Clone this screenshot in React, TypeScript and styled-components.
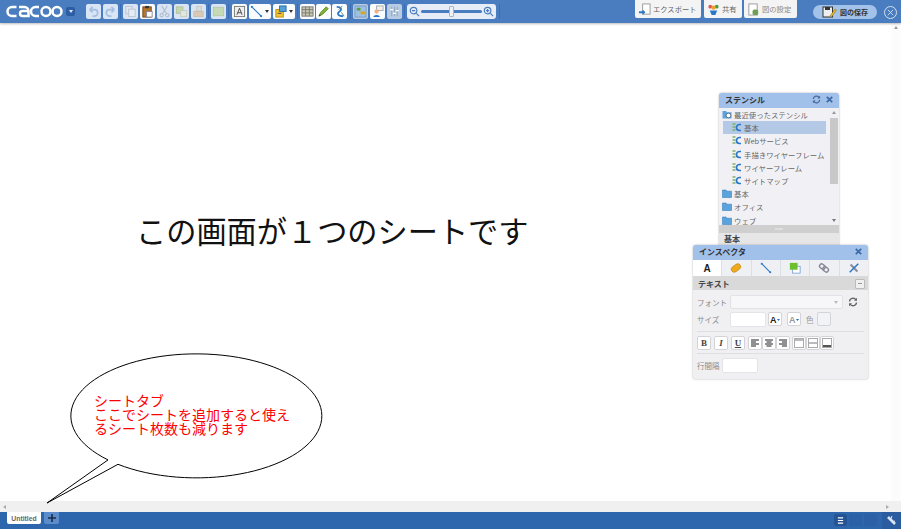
import React from "react";
import styled, { createGlobalStyle } from "styled-components";

const Global = createGlobalStyle`
  html, body { margin: 0; padding: 0; width: 901px; height: 529px; overflow: hidden; background: #fff; }
  body { font-family: "Noto Sans CJK JP", "Noto Sans", sans-serif; }
`;
const Page = styled.div`width: 901px; height: 529px; display: flex; flex-direction: column; position: relative; overflow: hidden;`;
const Header = styled.header`
  height: 23px; background: #4a7dbf; display: flex; align-items: center; padding-left: 6px; box-sizing: border-box;
  box-shadow: 0 1px 2px rgba(60,60,60,.35); position: relative; z-index: 2; flex: none;
`;
const Logo = styled.svg`width: 57px; height: 13px; flex: none;`;
const LogoMenu = styled.span`
  width: 9px; height: 9px; margin-left: 3px; margin-right: 11px; background: #2d5ea5; border-radius: 2px; flex: none;
  display: flex; align-items: center; justify-content: center;
  &::after { content: ""; border: 2.5px solid transparent; border-top: 3px solid #dfe8f5; border-bottom: 0; }
`;
const Tools = styled.div`display: flex; align-items: center; gap: 2px;`;
const TightTools = styled.div`display: flex; align-items: center; gap: 1px;`;
const Sep = styled.span<{ $l?: number; $r?: number }>`
  width: 1px; height: 15px; background: #3a6db3; margin: 0 ${p => p.$r ?? 0}px 0 ${p => p.$l ?? 0}px; flex: none;
`;
const Tool = styled.span<{ $dim?: boolean; $wide?: boolean; $on?: boolean }>`
  width: ${p => (p.$wide ? 22 : 15)}px; height: 15px; border-radius: 2px; flex: none;
  background: ${p => (p.$on ? "#b9cbe2" : p.$dim ? "#d9e5f4" : "#fbfcfe")};
  display: flex; align-items: center; padding-left: 1px; box-sizing: border-box;
  & > svg { width: 13px; height: 13px; flex: none; opacity: ${p => (p.$dim ? 0.6 : 1)}; }
`;
const Caret = styled.span`
  margin-left: 2px; border: 2.5px solid transparent; border-top: 3px solid #333; border-bottom: 0; flex: none;
`;
const ZoomBox = styled.div`
  width: 89px; height: 15px; background: #e6edf7; border-radius: 3px; display: flex; align-items: center;
  padding: 0 2px; box-sizing: border-box; gap: 1px; flex: none;
  & > svg { width: 11px; height: 11px; flex: none; }
`;
const Track = styled.div`flex: 1; height: 3px; background: #4a7dbf; border-radius: 2px; position: relative;`;
const Thumb = styled.span`position: absolute; left: 28px; top: -4px; width: 3px; height: 9px; background: #eef1f5; border: 1px solid #a9b5c6; border-radius: 1px;`;
const RightGroup = styled.div`margin-left: auto; display: flex; align-items: flex-start; align-self: flex-start; height: 19px;`;
const Action = styled.button<{ $w: number; $mr?: number; $dim?: boolean }>`
  width: ${p => p.$w}px; height: 18px; margin-right: ${p => p.$mr ?? 3}px; border: 0; padding: 0 0 0 3px; background: #f4f4f4; border-radius: 0 0 2px 2px;
  display: flex; align-items: center; gap: 2px; font: 7.3px "Noto Sans CJK JP", sans-serif; color: ${p => (p.$dim ? "#888" : "#666")};
  box-sizing: border-box; white-space: nowrap; & > svg { width: 13px; height: 13px; flex: none; }
`;
const SavePill = styled.button`
  width: 64px; height: 14px; margin: 5px 7px 0 16px; border: 0; border-radius: 7px; background: #a3c2ea; padding: 0 0 0 9px;
  display: flex; align-items: center; gap: 3px; font: bold 7px "Noto Sans CJK JP", sans-serif; color: #333; box-sizing: border-box; white-space: nowrap;
  & > svg { width: 15px; height: 12px; flex: none; }
`;
const CloseRing = styled.span`
  width: 13px; height: 13px; margin: 6px 4px 0 0; border: 1px solid #d4e0f0; border-radius: 50%; color: #d4e0f0; display: flex; box-sizing: border-box;
  align-items: center; justify-content: center; flex: none; & > svg { width: 9px; height: 9px; }
`;
const Middle = styled.div`flex: 1; display: flex; min-height: 0;`;
const Canvas = styled.main`flex: 1; position: relative; background: #fff;`;
const VScroll = styled.div`width: 10px; background: #fcfcfc; display: flex; justify-content: center; padding-top: 3px; box-sizing: border-box; flex: none;`;
const Arrow = styled.span<{ $d: "up" | "down" | "left" | "right"; $c?: string }>`
  width: 0; height: 0; border: 2.5px solid transparent; flex: none;
  ${p => (p.$d === "up" ? `border-top:0;border-bottom:3px solid ${p.$c ?? "#999"};` : "")}
  ${p => (p.$d === "down" ? `border-bottom:0;border-top:3px solid ${p.$c ?? "#777"};` : "")}
  ${p => (p.$d === "left" ? `border-left:0;border-right:3px solid ${p.$c ?? "#aaa"};` : "")}
  ${p => (p.$d === "right" ? `border-right:0;border-left:3px solid ${p.$c ?? "#aaa"};` : "")}
`;
const HScroll = styled.div`height: 11px; background: #f0f0f0; display: flex; align-items: center; justify-content: space-between; padding: 0 12px 0 3px; flex: none;`;
const Footer = styled.footer`height: 17px; background: #2e66ae; display: flex; align-items: flex-start; padding-left: 7px; flex: none;`;
const SheetTab = styled.div`
  width: 34px; height: 12px; background: #fff; border-radius: 0 0 2px 2px; font: bold 6.8px "Liberation Sans", sans-serif; color: #666;
  display: flex; align-items: center; justify-content: center;
`;
const AddTab = styled.div`
  width: 15px; height: 12px; margin-left: 3px; background: #5b8ccb; border-radius: 0 0 2px 2px; display: flex; align-items: center; justify-content: center;
  & > svg { width: 8px; height: 8px; }
`;
const FooterRight = styled.div`margin-left: auto; display: flex; height: 17px; align-items: flex-start;`;
const FootBtn = styled.span<{ $on?: boolean }>`
  width: 13px; height: 12px; margin-right: 2px; margin-top: 2px; border-radius: 2px; background: ${p => (p.$on ? "#245494" : "#2b60a6")};
  display: flex; align-items: center; justify-content: center; & > svg { width: 7px; height: 7px; }
`;
const FootEnd = styled.span`
  width: 19px; height: 17px; margin-left: 3px; background: #2a5c9f; display: flex; align-items: center; justify-content: center; & > svg { width: 11px; height: 11px; }
`;
const Headline = styled.div`position: absolute; left: 136px; top: 186px; font-size: 30.2px; line-height: 42px; color: #111; white-space: nowrap;`;
const Bubble = styled.svg`position: absolute; left: 40px; top: 325px; width: 300px; height: 160px; overflow: visible;`;
const BubbleText = styled.div`position: absolute; left: 94px; top: 370px; width: 200px; font-size: 14px; line-height: 14px; color: #f00;`;
const BubbleLine = styled.div`white-space: nowrap; height: 14px;`;

const Panel = styled.section<{ $x: number; $y: number; $w: number; $h: number }>`
  position: absolute; left: ${p => p.$x}px; top: ${p => p.$y}px; width: ${p => p.$w}px; height: ${p => p.$h}px;
  background: #f0f0f3; border-radius: 3px 3px 2px 2px; box-shadow: 0 0 2px rgba(90,90,90,.55); overflow: hidden; box-sizing: border-box;
`;
const PanelHead = styled.div`
  height: 15px; background: #a1c0ea; display: flex; align-items: center; padding: 0 5px 2px 6px; box-sizing: border-box; gap: 4px; font: bold 8px "Noto Sans CJK JP", sans-serif; color: #333;
  & > span { flex: 1; } & > svg { width: 9px; height: 9px; flex: none; }
`;
const ListWrap = styled.div`display: flex; height: 117px; background: #f1f1f5;`;
const List = styled.div`flex: 1; padding: 0 3px; overflow: hidden; min-width: 0;`;
const Row = styled.div<{ $indent?: boolean; $sel?: boolean }>`
  height: 13.2px; display: flex; align-items: center; gap: 2px; font-size: 7.4px; color: #666; white-space: nowrap;
  margin-left: ${p => (p.$indent ? 1 : 0)}px; padding-left: ${p => (p.$indent ? 9 : 0)}px;
  background: ${p => (p.$sel ? "#b3c9e6" : "transparent")};
  & > svg { width: 10px; height: 9px; flex: none; }
`;
const Scroll = styled.div`width: 10px; display: flex; flex-direction: column; align-items: center; padding: 3px 0; box-sizing: border-box; gap: 4px; flex: none;`;
const ScrollThumb = styled.div`width: 8px; height: 66px; background: #c8c8c8;`;
const ScrollGap = styled.div`flex: 1;`;
const Handle = styled.div`height: 8px; background: #cfcfcf; display: flex; align-items: center; justify-content: center; &::after { content: ""; width: 8px; height: 2px; background: #dedede; }`;
const PaneTitle = styled.div`height: 12px; background: #e6e6e6; font: bold 8px "Noto Sans CJK JP", sans-serif; color: #444; padding-left: 5px; line-height: 12px;`;
const Tabs = styled.div`display: flex; height: 17px; border-bottom: 1px solid #d8d8d8; box-sizing: border-box; background: #eef0f3;`;
const Tab = styled.div<{ $on?: boolean }>`
  flex: 1; display: flex; align-items: center; justify-content: center; background: ${p => (p.$on ? "#fff" : "transparent")};
  font: bold 10px "Liberation Sans", sans-serif; color: #222; & + & { border-left: 1px solid #dcdfe4; } & > svg { width: 12px; height: 12px; }
`;
const SecHead = styled.div`
  height: 13px; background: #d9d9d9; display: flex; align-items: center; justify-content: space-between; padding: 0 3px 0 5px;
  font: bold 8px "Noto Sans CJK JP", sans-serif; color: #444;
`;
const MinusBox = styled.span`
  width: 8px; height: 8px; background: #f0f0f0; border: 1px solid #bbb; border-radius: 1px; display: flex; align-items: center; justify-content: center;
  &::after { content: ""; width: 4px; height: 1px; background: #999; }
`;
const Form = styled.div`padding: 5px 4px 0 4px; display: flex; flex-direction: column;`;
const FormRow = styled.div<{ $h: number }>`display: flex; align-items: center; height: ${p => p.$h}px; flex: none;`;
const Label = styled.span<{ $w?: number }>`width: ${p => p.$w ?? 33}px; font-size: 7.5px; color: #888; white-space: nowrap; flex: none;`;
const Input = styled.div<{ $w: number; $ml?: number }>`
  width: ${p => p.$w}px; height: 14px; background: #f7f7f9; border: 1px solid #e2e2e6; border-radius: 2px; box-sizing: border-box; margin-left: ${p => p.$ml ?? 0}px; flex: none;
  display: flex; align-items: center; justify-content: flex-end; padding-right: 4px;
`;
const White = styled(Input)`background: #fff; border-color: #e4e4e8; height: 15px;`;
const IconGhost = styled.span<{ $ml?: number }>`margin-left: ${p => p.$ml ?? 0}px; display: flex; flex: none; & > svg { width: 10px; height: 10px; }`;
const Mini = styled.span<{ $ml?: number; $dim?: boolean }>`
  width: 14px; height: 14px; margin-left: ${p => p.$ml ?? 0}px; background: ${p => (p.$dim ? "#f2f3f6" : "#fff")}; border: 1px solid #d4d4d8; border-radius: 2px; box-sizing: border-box; flex: none;
  display: flex; align-items: center; justify-content: center; color: #444; font: bold 9px "Liberation Serif", serif;
  & > svg { width: 10px; height: 10px; }
`;
const Rule = styled.div`height: 1px; background: #dedee0; margin: 2px 0 3px;`;
const ColorWord = styled.span`font-size: 7.5px; color: #999; margin-left: 5px; flex: none;`;

const S = ({ children }: { children: React.ReactNode }) => <svg viewBox="0 0 14 14" fill="none">{children}</svg>;
const Undo = () => <S><path d="M3 5h5a3.5 3.5 0 0 1 0 7H6M3 5l3-3M3 5l3 3" stroke="#7fa6d6" strokeWidth="1.8" /></S>;
const Redo = () => <S><path d="M11 5H6a3.5 3.5 0 0 0 0 7h2M11 5 8 2M11 5 8 8" stroke="#7fa6d6" strokeWidth="1.8" /></S>;
const Copy = () => <S><rect x="2" y="1.5" width="7" height="8" fill="#e6e9ee" stroke="#a8b0bb" /><rect x="5" y="4.5" width="7" height="8" fill="#eef0f3" stroke="#a8b0bb" /></S>;
const Paste = () => <S><rect x="2" y="2" width="9" height="11" fill="#b5752b" stroke="#74481a" /><rect x="4.5" y="1" width="4" height="2.5" fill="#333" /><rect x="6" y="7" width="6" height="6" fill="#fff" stroke="#889" /></S>;
const Cut = () => <S><path d="M4 1l5 8M10 1 5 9" stroke="#9aa6b3" strokeWidth="1.2" /><circle cx="4" cy="11" r="1.8" stroke="#7f90a6" /><circle cx="10" cy="11" r="1.8" stroke="#7f90a6" /></S>;
const Front = () => <S><rect x="1.5" y="2" width="7" height="7" fill="#b9d07a" stroke="#9aad62" /><rect x="6" y="6" width="6.5" height="6.5" fill="#e3e7d0" stroke="#b7bca2" /></S>;
const Back = () => <S><rect x="5" y="1.5" width="5" height="5" fill="#d9d7c4" stroke="#b9b7a0" /><rect x="2" y="7" width="10" height="5.5" fill="#d9b88a" stroke="#b8a78a" /></S>;
const Group = () => <S><rect x="1.5" y="2.5" width="11" height="9" fill="#b8d28a" stroke="#a2b87a" /></S>;
const Tx = () => <S><rect x="1.5" y="1.5" width="11" height="11" fill="#eee" stroke="#777" /><path d="M4.2 10.5 7 3.5l2.8 7M5.2 8.3h3.6" stroke="#444" /></S>;
const LineI = () => <S><path d="M2 2l10 10" stroke="#2a78c8" strokeWidth="1.3" /><rect x="1" y="1" width="2" height="2" fill="#2a78c8" /><rect x="11" y="11" width="2" height="2" fill="#2a78c8" /></S>;
const Shape = () => <S><rect x="2" y="5" width="8" height="8" fill="#f2c230" stroke="#b98e10" /><rect x="6" y="1" width="7" height="6" fill="#55a0d8" stroke="#2c6ca8" /><path d="M4 9h4" stroke="#444" /></S>;
const Table = () => <S><rect x="1" y="2" width="12" height="10" fill="#c9c9b0" stroke="#777" /><path d="M1 5h12M1 8.500h12M5 2v10M9 2v10" stroke="#777" /></S>;
const Pen = () => <S><path d="M2 12l2-4 6-6 2 2-6 6z" fill="#82b535" stroke="#5c8a1e" /><path d="M2 12l2-1-1-1z" fill="#333" /></S>;
const Tool3 = () => <S><path d="M4 2c5 0 6 3 3 5s-2 5 4 5" stroke="#2a78c8" strokeWidth="1.8" /><path d="M10 1 6 5M9 8l3 4" stroke="#777" /></S>;
const Grid = () => <S><rect x="1" y="1" width="12" height="12" fill="#9bc0e6" stroke="#7a9bbf" /><rect x="3" y="3" width="4" height="3" fill="#5c9e3a" /><rect x="7" y="7" width="5" height="3" fill="#d9a520" /></S>;
const Chat = () => <S><rect x="6" y="1" width="7" height="5" fill="#eee" stroke="#aaa" /><circle cx="6" cy="7" r="2.300" fill="#f0b088" /><path d="M2.500 13c0-3 7-3 7 0z" fill="#2a78c8" /></S>;
const Align = () => <S><path d="M4 2v10M7 2v10M10 2v10" stroke="#90a8c4" strokeWidth="1.100" /><path d="M2.500 5h3M5.500 9h3M8.500 6h3" stroke="#fff" strokeWidth="1.500" /></S>;
const ZoomOut = () => <svg viewBox="0 0 12 12" fill="none"><circle cx="5" cy="5" r="3.600" stroke="#4a7dbf" strokeWidth="1.300" /><path d="M3.200 5h3.600M8 8l3 3" stroke="#4a7dbf" strokeWidth="1.300" /></svg>;
const ZoomIn = () => <svg viewBox="0 0 12 12" fill="none"><circle cx="5" cy="5" r="3.600" stroke="#4a7dbf" strokeWidth="1.300" /><path d="M3.200 5h3.600M5 3.200v3.600M8 8l3 3" stroke="#4a7dbf" strokeWidth="1.300" /></svg>;
const Export = () => <S><rect x="5" y="1" width="8" height="11" fill="#fff" stroke="#999" /><path d="M1 9h4V7l3 3-3 3v-2H1z" fill="#2a78c8" /></S>;
const Share = () => <S><circle cx="3.500" cy="4" r="2" fill="#e2574c" /><circle cx="10.500" cy="4" r="2" fill="#4d9a3a" /><circle cx="7" cy="5" r="2.200" fill="#f0a030" /><path d="M3 8h8l-2 5H5z" fill="#2a78c8" /></S>;
const Settings = () => <S><rect x="2" y="1" width="9" height="12" fill="#fff" stroke="#999" /><rect x="6" y="7" width="6" height="6" rx="2" fill="#6f9e55" /></S>;
const Save = () => <svg viewBox="0 0 15 12" fill="none"><rect x="1" y="1" width="9.500" height="10" fill="#eee" stroke="#333" /><rect x="3" y="1" width="5" height="3" fill="#333" /><path d="M8 10l5-7 1.500 1-5 7z" fill="#e8b830" stroke="#8a6a10" strokeWidth=".5" /></svg>;
const X = ({ c = "#3f6aa8", w = 2 }: { c?: string; w?: number }) => <svg viewBox="0 0 10 10" fill="none"><path d="M2 2l6 6M8 2l-6 6" stroke={c} strokeWidth={w} /></svg>;
const Refresh = ({ c = "#46699b" }: { c?: string }) => <svg viewBox="0 0 10 10" fill="none"><path d="M1.500 4.500A3.500 3.500 0 0 1 8 3M8.500 5.500A3.500 3.500 0 0 1 2 7" stroke={c} strokeWidth="1.400" /><path d="M9 .8v3H6zM1 9.200v-3h3z" fill={c} /></svg>;
const Stencil = () => <svg viewBox="0 0 10 9" fill="none"><path d="M.5 1h3M.5 4h3M.5 7h3" stroke="#7fb069" strokeWidth="1.500" /><path d="M9 1.500H7.500a3 3 0 0 0 0 6H9" stroke="#2a78c8" strokeWidth="1.700" /></svg>;
const Folder = () => <svg viewBox="0 0 10 9" fill="none"><path d="M.5 1h3.500l1 1.200h4.500v6.300H.5z" fill="#5ba3dc" stroke="#3a7fb8" strokeWidth=".6" /></svg>;
const Recent = () => <svg viewBox="0 0 10 9" fill="none"><path d="M.5 1h3.500l1 1.200h4.500v6.300H.5z" fill="#5ba3dc" /><circle cx="6.500" cy="5.500" r="2.300" fill="#fff" stroke="#456" strokeWidth=".7" /></svg>;
const Tag = () => <svg viewBox="0 0 14 14"><g transform="rotate(-35 7 7)"><rect x="1" y="3.500" width="12" height="7" rx="3.500" fill="#eeaa1c" stroke="#b97d10" strokeWidth=".6" /></g></svg>;
const Link = () => <svg viewBox="0 0 14 14" fill="none"><g transform="rotate(40 7 7)" stroke="#889" strokeWidth="1.600"><rect x="1" y="4.500" width="7" height="5" rx="2.500" /><rect x="6" y="4.500" width="7" height="5" rx="2.500" /></g></svg>;
const Fill = () => <svg viewBox="0 0 14 14"><rect x="4" y="5" width="9" height="8" fill="#fff" stroke="#7aa5d6" /><rect x="1" y="1" width="9" height="8" fill="#6cbf2f" /></svg>;
const Wrench = () => <svg viewBox="0 0 14 14" fill="none"><path d="M3 3l8 8" stroke="#8a8f99" strokeWidth="2.400" /><path d="M12 2 2 12" stroke="#2a78c8" strokeWidth="1.800" /></svg>;
const Lines = ({ d }: { d: string }) => <svg viewBox="0 0 10 10" fill="none"><path d={d} stroke="#222" strokeWidth="1.200" /></svg>;
const VBox = ({ y, c }: { y: number; c: string }) => <svg viewBox="0 0 10 10"><rect x=".5" y=".5" width="9" height="9" fill="#fff" stroke="#aaa" /><rect x="1" y={y} width="8" height="2" fill={c} /></svg>;
const FontUp = ({ c = "#222" }: { c?: string }) => <svg viewBox="0 0 10 10"><text x="0" y="8.500" fontSize="9" fontWeight="bold" fontFamily="Liberation Sans" fill={c}>A</text><path d="M7 5h3l-1.500 2z" fill="#2a6ab0" /></svg>;

const toolsA = [<Undo key="u" />, <Redo key="r" />];
const toolsB = [<Copy key="c" />, <Paste key="p" />, <Cut key="x" />, <Front key="f" />, <Back key="b" />];

export default function App() {
  return (
    <Page>
      <Global />
      <Header>
        <Logo viewBox="0 0 57 13" fill="none" stroke="#fff" strokeWidth="2.500">
          <path d="M10.500 2H6a4.500 4.500 0 0 0 0 9h4.500" />
          <path d="M13 2h5.500a4 4 0 0 1 4 4v5h-6a2.500 2.500 0 0 1 0-5h6" />
          <path d="M33 2h-3.500a4.500 4.500 0 0 0 0 9H33" />
          <circle cx="40" cy="6.500" r="4.500" />
          <circle cx="51" cy="6.500" r="4.500" />
        </Logo>
        <LogoMenu />
        <Tools>
          {toolsA.map((t, i) => <Tool key={i} $dim>{t}</Tool>)}
          <Sep />
          {toolsB.map((t, i) => <Tool key={i} $dim={i !== 1}>{t}</Tool>)}
          <Sep />
          <Tool $dim><Group /></Tool>
          <Sep $r={1} />
          <Tool><Tx /></Tool>
          <Tool $wide><LineI /><Caret /></Tool>
          <Tool $wide><Shape /><Caret /></Tool>
          <Sep />
          <TightTools>
            <Tool><Table /></Tool>
            <Tool><Pen /></Tool>
            <Tool><Tool3 /></Tool>
          </TightTools>
          <Sep $l={1} />
          <Tool $on><Grid /></Tool>
          <Tool><Chat /></Tool>
          <Tool $on><Align /></Tool>
          <Sep />
          <ZoomBox>
            <ZoomOut />
            <Track><Thumb /></Track>
            <ZoomIn />
          </ZoomBox>
          <Sep $l={1} />
        </Tools>
        <RightGroup>
          <Action $w={66}><Export />エクスポート</Action>
          <Action $w={38} $mr={2}><Share />共有</Action>
          <Action $w={53} $dim $mr={0}><Settings />図の設定</Action>
          <SavePill><Save />図の保存</SavePill>
          <CloseRing><X c="#d4e0f0" w={1} /></CloseRing>
        </RightGroup>
      </Header>
      <Middle>
        <Canvas>
          <Headline>この画面が１つのシートです</Headline>
          <Bubble viewBox="0 0 300 160" fill="none">
            <path d="M68 111.900A125.500 62 0 1 1 78 116.300L7 155Z" fill="#fff" stroke="#000" strokeWidth="1" />
          </Bubble>
          <BubbleText>
            <BubbleLine>シートタブ</BubbleLine>
            <BubbleLine>ここでシートを追加すると使え</BubbleLine>
            <BubbleLine>るシート枚数も減ります</BubbleLine>
          </BubbleText>
          <Panel $x={719} $y={70} $w={120} $h={155}>
            <PanelHead><span>ステンシル</span><Refresh /><X /></PanelHead>
            <ListWrap>
              <List>
                <Row><Recent />最近使ったステンシル</Row>
                <Row $indent $sel><Stencil />基本</Row>
                <Row $indent><Stencil />Webサービス</Row>
                <Row $indent><Stencil />手描きワイヤーフレーム</Row>
                <Row $indent><Stencil />ワイヤーフレーム</Row>
                <Row $indent><Stencil />サイトマップ</Row>
                <Row><Folder />基本</Row>
                <Row><Folder />オフィス</Row>
                <Row><Folder />ウェブ</Row>
              </List>
              <Scroll>
                <Arrow $d="up" />
                <ScrollThumb />
                <ScrollGap />
                <Arrow $d="down" />
              </Scroll>
            </ListWrap>
            <Handle />
            <PaneTitle>基本</PaneTitle>
          </Panel>
          <Panel $x={693} $y={222} $w={175} $h={134}>
            <PanelHead><span>インスペクタ</span><X /></PanelHead>
            <Tabs>
              <Tab $on>A</Tab>
              <Tab><Tag /></Tab>
              <Tab><LineI /></Tab>
              <Tab><Fill /></Tab>
              <Tab><Link /></Tab>
              <Tab><Wrench /></Tab>
            </Tabs>
            <SecHead>テキスト<MinusBox /></SecHead>
            <Form>
              <FormRow $h={14}>
                <Label>フォント</Label>
                <Input $w={113}><Arrow $d="down" $c="#bbb" /></Input>
                <IconGhost $ml={5}><Refresh c="#666" /></IconGhost>
              </FormRow>
              <FormRow $h={20}>
                <Label>サイズ</Label>
                <White $w={36} />
                <Mini $ml={2}><FontUp /></Mini>
                <Mini $ml={5}><FontUp c="#999" /></Mini>
                <ColorWord>色</ColorWord>
                <Mini $ml={3} $dim />
              </FormRow>
              <Rule />
              <FormRow $h={16}>
                <Mini>B</Mini>
                <Mini $ml={3}><i>I</i></Mini>
                <Mini $ml={3}><u>U</u></Mini>
                <Mini $ml={3}><Lines d="M1 2h8M1 4h5M1 6h8M1 8h5" /></Mini>
                <Mini><Lines d="M1 2h8M2.500 4h5M1 6h8M2.500 8h5" /></Mini>
                <Mini><Lines d="M1 2h8M4 4h5M1 6h8M4 8h5" /></Mini>
                <Mini $ml={2}><VBox y={1} c="#bbb" /></Mini>
                <Mini><VBox y={4} c="#bbb" /></Mini>
                <Mini><VBox y={7} c="#555" /></Mini>
              </FormRow>
              <Rule />
              <FormRow $h={16}>
                <Label $w={25}>行間隔</Label>
                <White $w={36} />
              </FormRow>
            </Form>
          </Panel>
        </Canvas>
        <VScroll><Arrow $d="up" /></VScroll>
      </Middle>
      <HScroll><Arrow $d="left" /><Arrow $d="right" /></HScroll>
      <Footer>
        <SheetTab>Untitled</SheetTab>
        <AddTab><svg viewBox="0 0 10 10"><path d="M4 0h2v4h4v2H6v4H4V6H0V4h4z" fill="#1d2c44" /></svg></AddTab>
        <FooterRight>
          <FootBtn $on><svg viewBox="0 0 8 8"><path d="M1 1h6M1 4h6M1 7h6" stroke="#fff" strokeWidth="1.400" /></svg></FootBtn>
          <FootBtn />
          <FootBtn />
          <FootEnd><svg viewBox="0 0 11 11" fill="none"><path d="M2 2l7 7" stroke="#dbe6f3" strokeWidth="2.600" /><path d="M6 1 4.500 5M9 6 6 7" stroke="#dbe6f3" /></svg></FootEnd>
        </FooterRight>
      </Footer>
    </Page>
  );
}
